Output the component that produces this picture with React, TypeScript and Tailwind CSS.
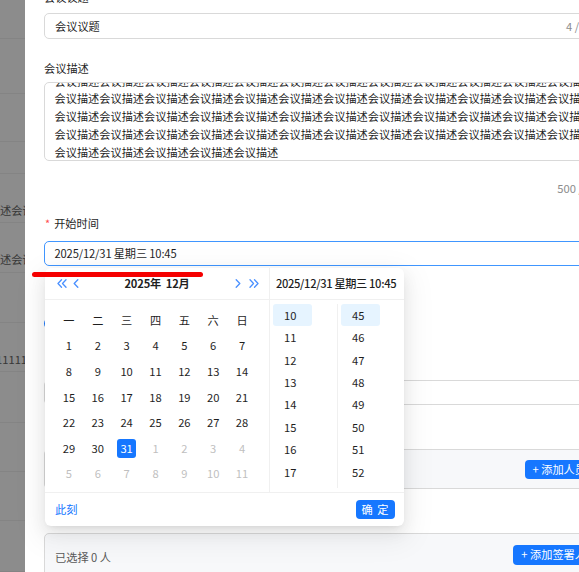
import React from 'react';

// background table rows behind the mask (only a 25px strip shows)
const bgRows = [
  { cls: 'h-[39px]' },
  { cls: 'h-[55px]' },
  { cls: 'h-[48px]' },
  { cls: 'h-[32px]' },
  { cls: 'h-[49px]', text: '会议描述会议描述会议', shift: 'ml-[-33.6px]' },
  { cls: 'h-[50px]', text: '会议描述会议描述会议', shift: 'ml-[-33.6px]' },
  { cls: 'h-[50px]' },
  { cls: 'h-[49px]', text: '111111111111', shift: 'ml-[-4px]' },
  { cls: 'h-[51px]' },
  { cls: 'h-[49px]' },
  { cls: 'h-[49px]' },
  { cls: 'h-[51px]' },
];

const weekDays = ['一', '二', '三', '四', '五', '六', '日'];

const cells: { d: number; muted?: boolean; selected?: boolean }[] = [
  ...Array.from({ length: 31 }, (_, i) => ({ d: i + 1, selected: i === 30 })),
  ...Array.from({ length: 11 }, (_, i) => ({ d: i + 1, muted: true })),
];

const hours = [10, 11, 12, 13, 14, 15, 16, 17];
const minutes = [45, 46, 47, 48, 49, 50, 51, 52];

const desc = '会议描述';

const DoubleLeft = () => (
  <svg width="10" height="9" viewBox="0 0 10 9" fill="none" stroke="currentColor" strokeWidth="1.3" strokeLinecap="round" strokeLinejoin="round">
    <path d="M4.5 0.8 L1 4.5 L4.5 8.2" />
    <path d="M9 0.8 L5.5 4.5 L9 8.2" />
  </svg>
);
const SingleLeft = () => (
  <svg width="6" height="9" viewBox="0 0 6 9" fill="none" stroke="currentColor" strokeWidth="1.3" strokeLinecap="round" strokeLinejoin="round">
    <path d="M4.8 0.8 L1.2 4.5 L4.8 8.2" />
  </svg>
);
const SingleRight = () => (
  <svg width="6" height="9" viewBox="0 0 6 9" fill="none" stroke="currentColor" strokeWidth="1.3" strokeLinecap="round" strokeLinejoin="round">
    <path d="M1.2 0.8 L4.8 4.5 L1.2 8.2" />
  </svg>
);
const DoubleRight = () => (
  <svg width="10" height="9" viewBox="0 0 10 9" fill="none" stroke="currentColor" strokeWidth="1.3" strokeLinecap="round" strokeLinejoin="round">
    <path d="M1 0.8 L4.5 4.5 L1 8.2" />
    <path d="M5.5 0.8 L9 4.5 L5.5 8.2" />
  </svg>
);

const Label: React.FC<{ text: string; required?: boolean; className?: string }> = ({ text, required, className }) => (
  <div className={`h-[18px] leading-[18px] text-[#1f1f1f] flex items-center ${className ?? ''}`}>
    {required && <span className="text-[#ff4d4f] mr-[4px] ml-[1px] text-[11px]">*</span>}
    {text}
  </div>
);

const App: React.FC = () => {
  return (
    <div className="relative w-[579px] h-[572px] overflow-hidden bg-white text-[11.2px] font-['Noto_Sans_CJK_SC',sans-serif]">
      {/* page behind the drawer */}
      <div className="flex flex-col w-full">
        {bgRows.map((r, i) => (
          <div key={i} className={`${r.cls} border-b border-[#f0f0f0] overflow-hidden`}>
            {r.text && (
              <div className={`pt-[27px] leading-[18px] whitespace-nowrap text-[#666] ${r.shift}`}>{r.text}</div>
            )}
          </div>
        ))}
      </div>

      {/* mask */}
      <div className="absolute inset-0 bg-black/45" />

      {/* drawer */}
      <div className="absolute left-[25px] top-0 h-full w-[600px] bg-white overflow-hidden">
        <div className="ml-[19px] w-[561px] mt-[-12px]">
          <Label text="会议议题" />
          <div className="mt-[7px] h-[26px] border border-[#d9d9d9] rounded-[5px] flex items-center justify-between px-[10px]">
            <span className="text-[#1f1f1f]">会议议题</span>
            <span className="text-[#8c8c8c]">4 / 20</span>
          </div>

          <Label text="会议描述" className="mt-[20px]" />
          <div className="mt-[5px] h-[79px] border border-[#d9d9d9] rounded-[5px] overflow-hidden">
            <div className="mt-[-10.5px] pl-[9.5px] leading-[17.8px] text-[#1f1f1f] whitespace-nowrap">
              <div>{desc.repeat(14)}</div>
              <div>{desc.repeat(14)}</div>
              <div>{desc.repeat(14)}</div>
              <div>{desc.repeat(14)}</div>
              <div>{desc.repeat(5)}</div>
            </div>
          </div>
          <div className="mt-[18px] h-[18px] leading-[18px] text-right pr-[1px] text-[#8c8c8c]">500 / 500</div>

          <Label text="开始时间" required className="mt-[17px]" />
          <div className="mt-[9px] h-[25px] border border-[#4096ff] rounded-[5px] flex items-center px-[9.5px] text-[#1f1f1f] tracking-[-0.15px]">
            2025/12/31 星期三 10:45
          </div>

          {/* items hidden behind the picker */}
          <Label text="结束时间" required className="mt-[19.5px]" />
          <div className="mt-[7px] h-[25px] flex items-center gap-[6px]">
            <span className="w-[13px] h-[13px] rounded-full border-[4px] border-[#1677ff]" />
            <span className="text-[#1f1f1f]">线上会议</span>
          </div>
          <Label text="会议地点" required className="mt-[18px]" />
          <div className="mt-[8px] h-[25.5px] border border-[#d9d9d9] rounded-[5px]" />
          <Label text="参会人员" required className="mt-[19px]" />
          <div className="mt-[7px] h-[40px] border border-[#d9d9d9] rounded-[5px] bg-[#f7f8fa] flex items-center justify-between px-[10px]">
            <span className="text-[#595959]">已选择 0 人</span>
            <span className="h-[19px] px-[8px] rounded-[4px] bg-[#1677ff] text-white flex items-center">+ 添加人员</span>
          </div>
          <Label text="签署人" required className="mt-[19px]" />
          <div className="mt-[7px] h-[46px] border border-[#d9d9d9] rounded-[5px] bg-[#f7f8fa] flex items-center justify-between px-[10px]">
            <span className="text-[#595959] mt-[3px]">已选择 0 人</span>
            <span className="h-[20px] px-[8px] rounded-[4px] bg-[#1677ff] text-white flex items-center mt-[-3px]">+ 添加签署人</span>
          </div>
        </div>
      </div>

      {/* date-time picker popup */}
      <div className="absolute left-[45px] top-[268px] w-[359px] bg-white rounded-[6px] shadow-[0_6px_16px_0_rgba(0,0,0,0.08),0_3px_6px_-4px_rgba(0,0,0,0.12),0_9px_28px_8px_rgba(0,0,0,0.05)] text-[#1f1f1f]">
        <div className="flex border-b border-[#f0f0f0]">
          {/* date panel */}
          <div className="w-[224px]">
            <div className="h-[32px] flex items-center pl-[10px] pr-[8px] border-b border-[#f0f0f0] text-[#4a90ff]">
              <span className="w-[14px] flex justify-center"><DoubleLeft /></span>
              <span className="w-[14px] flex justify-center"><SingleLeft /></span>
              <span className="flex-1 text-center font-semibold text-[#1f1f1f] tracking-[-0.2px]">
                2025年&nbsp;&nbsp;12月
              </span>
              <span className="w-[14px] flex justify-center mr-[2px]"><SingleRight /></span>
              <span className="w-[14px] flex justify-center"><DoubleRight /></span>
            </div>
            <div className="pt-[7.5px] pb-[5.5px] pl-[9.5px]">
              <div className="grid grid-cols-7 w-[202px]">
                {weekDays.map((w) => (
                  <div key={w} className="h-[25.6px] flex items-center justify-center">{w}</div>
                ))}
                {cells.map((c, i) => (
                  <div key={i} className="h-[25.6px] flex items-center justify-center">
                    <span
                      className={`w-[19.2px] h-[19.2px] rounded-[3px] flex items-center justify-center ${
                        c.selected ? 'bg-[#1677ff] text-white' : c.muted ? 'text-[#bfbfbf]' : 'text-[#1f1f1f]'
                      }`}
                    >
                      {c.d}
                    </span>
                  </div>
                ))}
              </div>
            </div>
          </div>

          {/* time panel */}
          <div className="w-[135px] border-l border-[#f0f0f0]">
            <div className="h-[32px] flex items-center pl-[6px] border-b border-[#f0f0f0] font-medium whitespace-nowrap tracking-[-0.35px]">
              2025/12/31 星期三 10:45
            </div>
            <div className="flex py-[4px] h-[192px]">
              <div className="w-[67px]">
                {hours.map((h) => (
                  <div key={h} className="h-[22.4px] px-[3px]">
                    <div className={`h-full w-[39px] rounded-[3px] flex items-center pl-[11px] ${h === 10 ? 'bg-[#e6f4ff]' : ''}`}>{h}</div>
                  </div>
                ))}
              </div>
              <div className="w-[67px] border-l border-[#f0f0f0]">
                {minutes.map((m) => (
                  <div key={m} className="h-[22.4px] px-[3px]">
                    <div className={`h-full w-[39px] rounded-[3px] flex items-center pl-[11px] ${m === 45 ? 'bg-[#e6f4ff]' : ''}`}>{m}</div>
                  </div>
                ))}
              </div>
            </div>
          </div>
        </div>
        <div className="h-[33px] flex items-center justify-between pl-[10px] pr-[9px]">
          <span className="text-[#1677ff]">此刻</span>
          <span className="h-[19px] w-[39px] rounded-[4px] bg-[#1677ff] text-white flex items-center justify-center tracking-[1px]">确 定</span>
        </div>
      </div>

      {/* red annotation stroke */}
      <div className="absolute left-[32px] top-[272px] w-[171px] h-[5px] rounded-full bg-[#f50000]" />
    </div>
  );
};

export default App;
